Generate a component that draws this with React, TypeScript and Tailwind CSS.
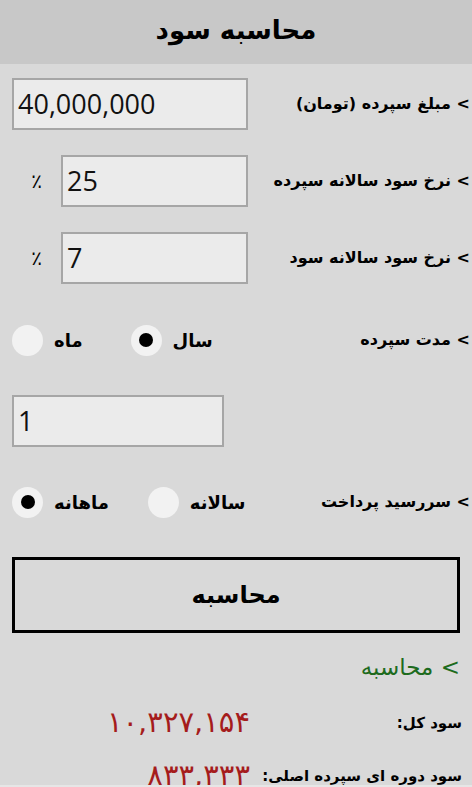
import React from 'react';

const fa = { fontFamily: '"DejaVu Sans", sans-serif' };

const Label: React.FC<{ text: string }> = ({ text }) => (
  <span className="text-[16px] font-bold text-black whitespace-nowrap">{text}</span>
);

const Field: React.FC<{ value: string; width: string }> = ({ value, width }) => (
  <div
    dir="ltr"
    className={`${width} h-[52px] border-2 border-[#a6a6a6] bg-[#ebebeb] flex items-center pl-[4px] text-[27px] text-[#111]`}
    style={{ fontFamily: '"Open Sans", sans-serif' }}
  >
    {value}
  </div>
);

const Radio: React.FC<{ label: string; checked?: boolean }> = ({ label, checked }) => (
  <div className="flex items-center gap-[11px]">
    <span className="text-[18px] font-bold">{label}</span>
    <span className="w-[31px] h-[31px] rounded-full bg-[#f2f2f2] flex items-center justify-center">
      {checked && <span className="w-[14px] h-[14px] rounded-full bg-black" />}
    </span>
  </div>
);

export default function App() {
  return (
    <div
      className="w-[472px] h-[787px] overflow-hidden bg-[#d9d9d9] text-black border-b-2 border-[#e6e6e6]"
      style={fa}
      dir="rtl"
    >
      <div className="h-16 bg-[#c8c8c8] flex items-center justify-center pb-1">
        <h1 className="text-[26px] font-bold">محاسبه سود</h1>
      </div>

      <div className="pr-[2px] pl-3">
        <div className="mt-[14px] flex items-center justify-between">
          <Label text="> مبلغ سپرده (تومان)" />
          <Field value="40,000,000" width="w-[236px]" />
        </div>

        <div className="mt-[25px] flex items-center justify-between">
          <Label text="> نرخ سود سالانه سپرده" />
          <div className="flex items-center">
            <Field value="25" width="w-[187px]" />
            <span className="w-[49px] text-center text-[20px]">٪</span>
          </div>
        </div>

        <div className="mt-[25px] flex items-center justify-between">
          <Label text="> نرخ سود سالانه سود" />
          <div className="flex items-center">
            <Field value="7" width="w-[187px]" />
            <span className="w-[49px] text-center text-[20px]">٪</span>
          </div>
        </div>

        <div className="mt-[30px] h-[52px] flex items-center justify-between">
          <Label text="> مدت سپرده" />
          <div className="flex items-center gap-[48px]">
            <Radio label="سال" checked />
            <Radio label="ماه" />
          </div>
        </div>

        <div className="mt-[29px] flex justify-end">
          <Field value="1" width="w-[212px]" />
        </div>

        <div className="mt-[29px] h-[52px] flex items-center justify-between">
          <Label text="> سررسید پرداخت" />
          <div className="flex items-center gap-[39px]">
            <Radio label="سالانه" />
            <Radio label="ماهانه" checked />
          </div>
        </div>
      </div>

      <div className="px-3">
        <button className="mt-[29px] w-full h-[76px] border-[3px] border-black bg-[#d9d9d9] text-[24px] font-bold flex items-center justify-center">
          محاسبه
        </button>

        <div className="mt-[17px] h-[34px] flex items-center text-[23px] text-[#1d6b1d]">{'> محاسبه'}</div>
      </div>

      <div className="pl-3 pr-[10px]">
        <div className="mt-[19px] h-[40px] flex items-center">
          <span className="w-[212px] text-[15px] font-bold">سود کل:</span>
          <span className="text-[29px] text-[#a51c1c]">۱۰,۳۲۷,۱۵۴</span>
        </div>

        <div className="mt-[13px] h-[40px] flex items-center">
          <span className="w-[212px] text-[15px] font-bold whitespace-nowrap">سود دوره ای سپرده اصلی:</span>
          <span className="text-[29px] text-[#a51c1c]">۸۳۳,۳۳۳</span>
        </div>
      </div>
    </div>
  );
}
